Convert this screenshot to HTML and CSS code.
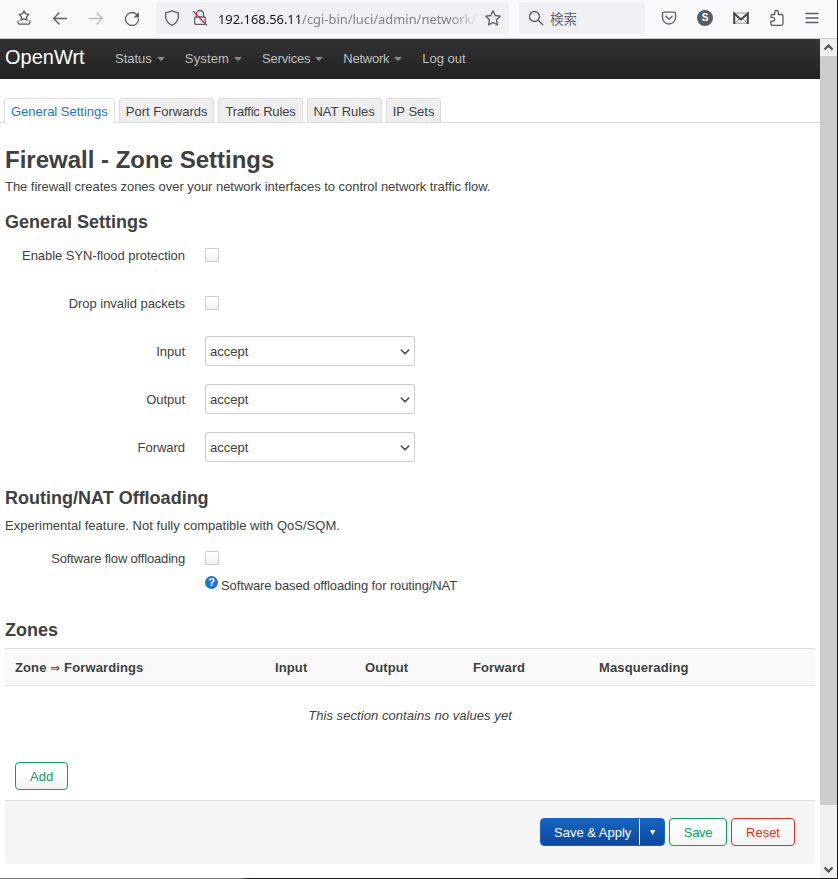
FILE: index.html
```
<!DOCTYPE html>
<html lang="en">
<head>
    <meta charset="UTF-8">
    <meta name="viewport" content="width=device-width, initial-scale=1.0">
    <title>OpenWrt - Firewall</title>
    <link rel="stylesheet" href="styles.css">
</head>
<body>
<div class="window">
    <div class="toolbar">
        <div class="nav-icons">
            <svg width="16" height="18" viewBox="0 0 16 18"><path d="M8 1.800l1.500 3.100 3.400.5-2.500 2.400.6 3.400L8 9.600l-3 1.600.6-3.400-2.500-2.400 3.400-.5z"/><path d="M2 12v1.500q0 1.700 1.700 1.700h8.600q1.700 0 1.700-1.700V12"/></svg>
            <svg width="16" height="16" viewBox="0 0 16 16"><path d="M14.500 8.500H1.500M7 3L1.500 8.500 7 14"/></svg>
            <svg class="off" width="16" height="16" viewBox="0 0 16 16"><path d="M1 8.500h13.500M9 3l5.500 5.500L9 14"/></svg>
            <svg width="16" height="16" viewBox="0 0 16 16"><path d="M12.600 4.400A6.500 6.500 0 1 0 14.500 9"/><path class="fill" d="M15 2v5.500H9.500z"/></svg>
        </div>
        <div class="urlbar">
            <svg width="16" height="18" viewBox="0 0 16 18"><path d="M8 1.700c2 1.300 4 1.900 6.300 2v3.500c0 4.500-2.500 7.500-6.300 9.100-3.800-1.600-6.300-4.600-6.300-9.100V3.700C4 3.600 6 3 8 1.700z"/></svg>
            <svg class="lock" width="16" height="18" viewBox="0 0 16 18"><path d="M4.500 8V5a3.500 3.500 0 0 1 7 0v3M3.700 8h8.600q1 0 1 1v5.300q0 1-1 1H3.700q-1 0-1-1V9q0-1 1-1z"/><path class="slash" d="M1.500 2.500l13 13.500"/></svg>
            <div class="url"><b>192.168.56.11</b>/cgi-bin/luci/admin/network/</div>
            <svg width="18" height="18" viewBox="0 0 18 18"><path d="M9 1.800l2.200 4.700 5 .7-3.700 3.600.9 5.100L9 13.500l-4.400 2.400.9-5.100L1.800 7.200l5-.7z"/></svg>
        </div>
        <div class="searchbar">
            <svg width="16" height="16" viewBox="0 0 16 16"><circle cx="6.500" cy="6.500" r="5"/><path d="M10.200 10.200l4.600 4.600"/></svg>
            <span>検索</span>
        </div>
        <div class="ext-icons">
            <svg width="16" height="16" viewBox="0 0 16 16"><path d="M3 2.200h10q1.500 0 1.500 1.500V7.500a6.500 6.500 0 0 1-13 0V3.700q0-1.500 1.500-1.500z"/><path d="M4.800 6.300L8 9.300l3.200-3"/></svg>
            <span class="account">S</span>
            <svg class="mail" width="16" height="16" viewBox="0 0 16 16"><path class="thin" d="M1 13.200h14M2 13l4.500-4.500M14 13L9.500 8.500M2 3h12"/><path class="bold" d="M1.200 14V3.500L8 9.500l6.800-6V14"/></svg>
            <svg width="16" height="18" viewBox="0 0 16 18"><path d="M2 7q0-1.500 1.500-1.500h2.200V3.300a1.800 1.800 0 0 1 3.600 0v2.200h3.200q1.500 0 1.500 1.500v7.800q0 1.500-1.500 1.500h-9q-1.500 0-1.500-1.500v-2.600h1.800a1.900 1.900 0 0 0 0-3.800H2z"/></svg>
            <svg width="14" height="14" viewBox="0 0 14 14"><path d="M1 2.500h12M1 7h12M1 11.500h12"/></svg>
        </div>
    </div>

    <div class="viewport">
        <div class="page">
            <header>
                <a class="brand">OpenWrt</a>
                <ul class="nav">
                    <li class="dropdown">Status</li>
                    <li class="dropdown system">System</li>
                    <li class="dropdown services">Services</li>
                    <li class="dropdown network">Network</li>
                    <li>Log out</li>
                </ul>
            </header>

            <ul class="tabs">
                <li class="active">General Settings</li>
                <li>Port Forwards</li>
                <li class="traffic">Traffic Rules</li>
                <li class="nat">NAT Rules</li>
                <li>IP Sets</li>
            </ul>

            <main>
                <h2>Firewall - Zone Settings</h2>
                <p class="descr">The firewall creates zones over your network interfaces to control network traffic flow.</p>

                <h3>General Settings</h3>
                <div class="row"><label for="syn">Enable SYN-flood protection</label><input type="checkbox" id="syn"></div>
                <div class="row"><label for="drop">Drop invalid packets</label><input type="checkbox" id="drop"></div>
                <div class="row">
                    <label for="input">Input</label>
                    <div class="select"><select id="input"><option>accept</option></select><svg width="10" height="6" viewBox="0 0 10 6"><path d="M1.200 1l3.800 3.800L8.800 1"/></svg></div>
                </div>
                <div class="row">
                    <label for="output">Output</label>
                    <div class="select"><select id="output"><option>accept</option></select><svg width="10" height="6" viewBox="0 0 10 6"><path d="M1.200 1l3.800 3.800L8.800 1"/></svg></div>
                </div>
                <div class="row">
                    <label for="forward">Forward</label>
                    <div class="select"><select id="forward"><option>accept</option></select><svg width="10" height="6" viewBox="0 0 10 6"><path d="M1.200 1l3.800 3.800L8.800 1"/></svg></div>
                </div>

                <h3>Routing/NAT Offloading</h3>
                <p class="descr offload">Experimental feature. Not fully compatible with QoS/SQM.</p>
                <div class="row short"><label for="flow">Software flow offloading</label><input type="checkbox" id="flow"></div>
                <div class="help"><i>?</i><span>Software based offloading for routing/NAT</span></div>

                <h3>Zones</h3>
                <div class="table">
                    <div class="thead">
                        <span>Zone <small>⇒</small> Forwardings</span>
                        <span>Input</span>
                        <span>Output</span>
                        <span>Forward</span>
                        <span>Masquerading</span>
                    </div>
                    <div class="empty"><em>This section contains no values yet</em></div>
                </div>
                <button class="btn add">Add</button>

                <div class="actions">
                    <div class="btn apply"><span>Save &amp; Apply</span><span class="more">▾</span></div>
                    <button class="btn save">Save</button>
                    <button class="btn reset">Reset</button>
                </div>
            </main>
        </div>
        <div class="scrollbar">
            <svg width="17" height="17" viewBox="0 0 17 17"><path d="M4.500 10.500l4-4 4 4"/></svg>
            <div class="thumb"></div>
            <svg class="down" width="17" height="17" viewBox="0 0 17 17"><path d="M4.500 6.500l4 4 4-4"/></svg>
        </div>
    </div>
</div>
</body>
</html>
```
FILE: styles.css
```
* {
    box-sizing: border-box;
}

body {
    margin: 0;
    background: #fff;
    color: #404040;
    font: 13px/18px "Liberation Sans", Arial, sans-serif;
}

ul {
    list-style: none;
    margin: 0;
    padding: 0;
}

.window {
    width: 838px;
    height: 879px;
    border: solid #111;
    border-width: 0 1px 1px 0;
    border-image: linear-gradient(to right, #777 240px, #1a1719 250px) 1;
    overflow: hidden;
}

svg {
    display: block;
    flex: none;
    fill: none;
    stroke: #5b5b66;
    stroke-width: 1.3;
    stroke-linejoin: round;
    stroke-linecap: round;
}

svg .fill {
    fill: #5b5b66;
    stroke: none;
}

/* browser toolbar */
.toolbar {
    display: flex;
    height: 39px;
    padding-top: 2px;
    background: #f9f9fb;
    border-bottom: 1px solid #ccc;
}

.nav-icons {
    display: flex;
    align-items: center;
    gap: 20px;
    width: 156px;
    height: 32px;
    padding-left: 16px;
}

.nav-icons .off {
    stroke: #bbbbc0;
}

.urlbar,
.searchbar {
    display: flex;
    align-items: center;
    height: 32px;
    background: #f0f0f4;
    border-radius: 4px;
}

.urlbar {
    width: 353px;
    padding-left: 8px;
}

.urlbar .lock {
    margin: 0 10px 0 12px;
}

.slash {
    stroke: #e22850;
}

.url {
    width: 262px;
    margin: 2px 4px 0 0;
    white-space: nowrap;
    font: 12.9px/20px "Noto Sans", sans-serif;
    color: #808086;
    -webkit-mask-image: linear-gradient(to right, #000 232px, transparent 262px);
    mask-image: linear-gradient(to right, #000 232px, transparent 262px);
}

.url b {
    font-weight: normal;
    color: #15141a;
}

.searchbar {
    width: 126px;
    margin-left: 10px;
    padding-left: 9px;
    gap: 6px;
    color: #6a6a72;
    font: 13.5px/20px "Noto Sans CJK JP", sans-serif;
}

.ext-icons {
    display: flex;
    align-items: center;
    gap: 20px;
    height: 32px;
    padding-left: 16px;
}

.account {
    width: 16px;
    height: 16px;
    border-radius: 50%;
    background: #5b5b66;
    color: #fff;
    font: bold 10px/16px "Liberation Sans", sans-serif;
    text-align: center;
}

.mail .thin {
    stroke: #999;
    stroke-width: 1;
}

.mail .bold {
    stroke: #444;
    stroke-width: 2;
    stroke-linecap: butt;
    stroke-linejoin: miter;
}

.viewport {
    display: flex;
    height: 839px;
}

.page {
    width: 820px;
}

header {
    display: flex;
    height: 40px;
    background: linear-gradient(#333, #222);
}

.brand {
    width: 115px;
    padding-left: 5px;
    color: #fff;
    font-size: 20px;
    line-height: 36px;
}

.nav {
    display: flex;
    gap: 20px;
    color: #bfbfbf;
    line-height: 39px;
}

.dropdown::after {
    content: "";
    display: inline-block;
    margin-left: 5px;
    vertical-align: 2px;
    border: 4px solid transparent;
    border-top-color: #8c8c8c;
    border-bottom: 0;
}

.system {
    letter-spacing: .15px;
}

.services {
    letter-spacing: -.2px;
}

.network {
    letter-spacing: -.25px;
}

.tabs {
    display: flex;
    gap: 4px;
    height: 44px;
    padding: 19px 0 0 4px;
    border-bottom: 1px solid #ddd;
}

.tabs li {
    height: 24px;
    padding: 0 6px;
    border: 1px solid #ddd;
    border-bottom: 0;
    border-radius: 4px 4px 0 0;
    background: #eee;
    line-height: 25px;
}

.tabs .active {
    height: 25px;
    background: #fff;
    color: #1976d2;
}

.tabs .traffic {
    letter-spacing: -.17px;
}

.tabs .nat {
    letter-spacing: -.05px;
}

main {
    padding: 19px 5px 0;
}

h2 {
    margin: 0;
    font-size: 24px;
    line-height: 36px;
}

.descr {
    margin: 0 0 17px;
    letter-spacing: -.04px;
}

h3 {
    margin: 17px 0 0;
    font-size: 18px;
    line-height: 18px;
}

.row {
    display: flex;
    align-items: center;
    gap: 20px;
    height: 48px;
}

.row + h3 {
    margin-top: 18px;
}

.row label {
    width: 180px;
    padding-top: 2px;
    letter-spacing: -.04px;
    text-align: right;
}

.row input {
    appearance: none;
    width: 14px;
    height: 14px;
    margin: 0;
    border: 1px solid #ccc;
    border-radius: 1px;
    background: linear-gradient(#fff, #f3f3f3);
}

.select {
    position: relative;
    width: 210px;
    height: 30px;
}

.select select {
    appearance: none;
    width: 100%;
    height: 100%;
    padding: 2px 4px 0;
    border: 1px solid #ccc;
    border-radius: 3px;
    background: #fff;
    color: #404040;
    font: inherit;
}

.select svg {
    position: absolute;
    right: 5px;
    top: 13px;
    stroke: #404040;
    stroke-width: 1.5;
}

.offload {
    margin: 10px 0 5px;
    letter-spacing: .02px;
}

.row.short {
    height: 36px;
}

.short label {
    letter-spacing: -.17px;
}

.help {
    display: flex;
    gap: 3px;
    height: 28px;
    padding-left: 200px;
    letter-spacing: -.12px;
}

.help span {
    padding-top: 1px;
}

.help i {
    width: 13px;
    height: 13px;
    border-radius: 50%;
    background: #1976d2;
    color: #fff;
    font: bold 11px/13px "Liberation Sans", sans-serif;
    text-align: center;
}

.table {
    margin-top: 9px;
}

.thead {
    display: grid;
    grid-template-columns: 260px 90px 108px 126px 1fr;
    height: 38px;
    padding-left: 10px;
    background: #f9f9f9;
    border-top: 1px solid #ddd;
    border-bottom: 1px solid #ddd;
    font-weight: bold;
    letter-spacing: .12px;
    line-height: 37px;
}

.thead small {
    font-size: 12px;
    font-weight: normal;
}

.empty {
    height: 76px;
    letter-spacing: .06px;
    line-height: 60px;
    text-align: center;
}

.btn {
    height: 28px;
    padding: 1px 14px 0;
    border: 1px solid;
    border-radius: 4px;
    background: linear-gradient(#fff, #fff 25%, #f3f3f3);
    font: 13px/26px "Liberation Sans", Arial, sans-serif;
}

.add {
    display: block;
    width: 53px;
    margin-left: 10px;
    color: #00a65a;
}

.actions {
    display: flex;
    justify-content: flex-end;
    gap: 4px;
    height: 64px;
    margin-top: 10px;
    padding: 17px 20px 0 0;
    background: #f5f5f5;
    border-top: 1px solid #ddd;
    border-radius: 0 0 3px 3px;
}

.save {
    width: 58px;
    padding: 1px 0 0;
    letter-spacing: -.3px;
    color: #00a65a;
}

.reset {
    width: 64px;
    color: #f5280f;
}

.apply {
    display: flex;
    width: 125px;
    padding: 0 0 0 13px;
    border-color: #1565c0;
    background: linear-gradient(#1565c0, #0d47a1);
    color: #fff;
    line-height: 27px;
    white-space: nowrap;
}

.apply span:first-child {
    width: 85px;
}

.apply .more {
    flex: 1;
    border-left: 1px solid #fff;
    font-size: 10px;
    line-height: 26px;
    text-align: center;
}

.scrollbar {
    display: flex;
    flex-direction: column;
    width: 17px;
    background: #f0f0f0;
}

.scrollbar svg {
    stroke: #505050;
    stroke-width: 2.2;
    stroke-linecap: butt;
    stroke-linejoin: miter;
}

.thumb {
    height: 749px;
    background: #cdcdcd;
}

.scrollbar .down {
    margin-top: auto;
}
```
